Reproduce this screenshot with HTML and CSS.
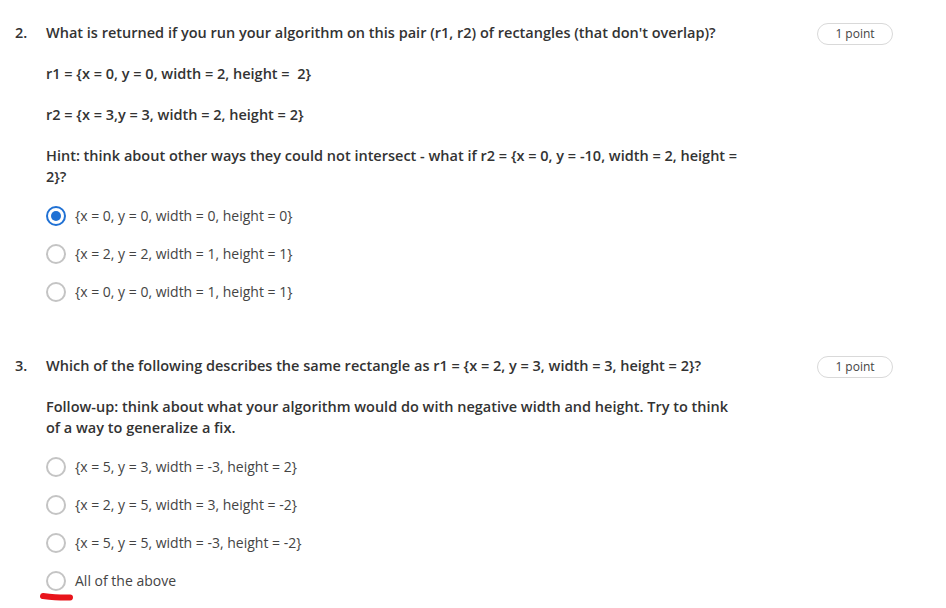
FILE: index.html
```html
<!DOCTYPE html>
<html>
<head>
<meta charset="utf-8">
<link rel="stylesheet" href="styles.css">
</head>
<body>
<div class="page">
  <section class="question q2">
    <div class="qnum">2.</div>
    <div class="qbody">
      <p class="qtext">What is returned if you run your algorithm on this pair (r1, r2) of rectangles (that don't overlap)?</p>
      <p class="qtext">r1 = {x = 0, y = 0, width = 2, height =&nbsp; 2}</p>
      <p class="qtext">r2 = {x = 3,y = 3, width = 2, height = 2}</p>
      <p class="qtext lead">Hint: think about other ways they could not intersect - what if r2 = {x = 0, y = -10, width = 2, height = 2}?</p>
      <ul class="options">
        <li class="option"><span class="radio checked"></span><span class="label">{x = 0, y = 0, width = 0, height = 0}</span></li>
        <li class="option"><span class="radio"></span><span class="label">{x = 2, y = 2, width = 1, height = 1}</span></li>
        <li class="option"><span class="radio"></span><span class="label">{x = 0, y = 0, width = 1, height = 1}</span></li>
      </ul>
    </div>
    <div class="points">1 point</div>
  </section>
  <section class="question q3">
    <div class="qnum">3.</div>
    <div class="qbody">
      <p class="qtext">Which of the following describes the same rectangle as r1 = {x = 2, y = 3, width = 3, height = 2}?</p>
      <p class="qtext lead">Follow-up: think about what your algorithm would do with negative width and height. Try to think of a way to generalize a fix.</p>
      <ul class="options">
        <li class="option"><span class="radio"></span><span class="label">{x = 5, y = 3, width = -3, height = 2}</span></li>
        <li class="option"><span class="radio"></span><span class="label">{x = 2, y = 5, width = 3, height = -2}</span></li>
        <li class="option"><span class="radio"></span><span class="label">{x = 5, y = 5, width = -3, height = -2}</span></li>
        <li class="option"><span class="radio"></span><span class="label">All of the above</span>
          <svg class="mark" width="36" height="12" viewBox="0 0 36 12"><path d="M4 5 C12 6 20 7 31 6.5" stroke="#e8141b" stroke-width="6" stroke-linecap="round" fill="none"/></svg>
        </li>
      </ul>
    </div>
    <div class="points">1 point</div>
  </section>
</div>
</body>
</html>
```
FILE: styles.css
```css
html, body {
  margin: 0;
  padding: 0;
  background: #ffffff;
}
body {
  font-family: "Open Sans", "Liberation Sans", sans-serif;
  color: #1f1f1f;
}
.page {
  width: 946px;
  height: 608px;
  overflow: hidden;
  padding: 22px 0 0 0;
  box-sizing: border-box;
}
.question {
  display: flex;
  align-items: flex-start;
}
.q3 {
  margin-top: 44px;
}
.qnum {
  width: 31px;
  padding-left: 15px;
  font-size: 14.5px;
  font-weight: 600;
  line-height: 21px;
  color: #333;
}
.qbody {
  width: 695px;
}
.qtext {
  margin: 0 0 20px 0;
  font-size: 14.5px;
  font-weight: 600;
  line-height: 21px;
  color: #333;
}
.qtext.lead {
  margin-bottom: 10px;
}
.options {
  list-style: none;
  margin: 0;
  padding: 0;
}
.option {
  position: relative;
  display: flex;
  align-items: center;
  height: 38px;
  font-size: 14px;
  color: #444;
}
.radio {
  width: 20px;
  height: 20px;
  box-sizing: border-box;
  border: 2px solid #c4c4c4;
  border-radius: 50%;
  margin-right: 9px;
  position: relative;
  flex: none;
}
.radio.checked {
  border: 2px solid #2071d4;
}
.radio.checked::after {
  content: "";
  position: absolute;
  left: 3px;
  top: 3px;
  width: 10px;
  height: 10px;
  border-radius: 50%;
  background: #2071d4;
}
.label {
  line-height: 20px;
}
.mark {
  position: absolute;
  left: -7px;
  top: 29px;
}
.points {
  margin-left: 76px;
  margin-top: 1px;
  width: 76px;
  height: 22px;
  box-sizing: border-box;
  border: 1px solid #d9d9d9;
  border-radius: 11px;
  font-size: 12px;
  line-height: 20px;
  text-align: center;
  color: #444;
}
```
